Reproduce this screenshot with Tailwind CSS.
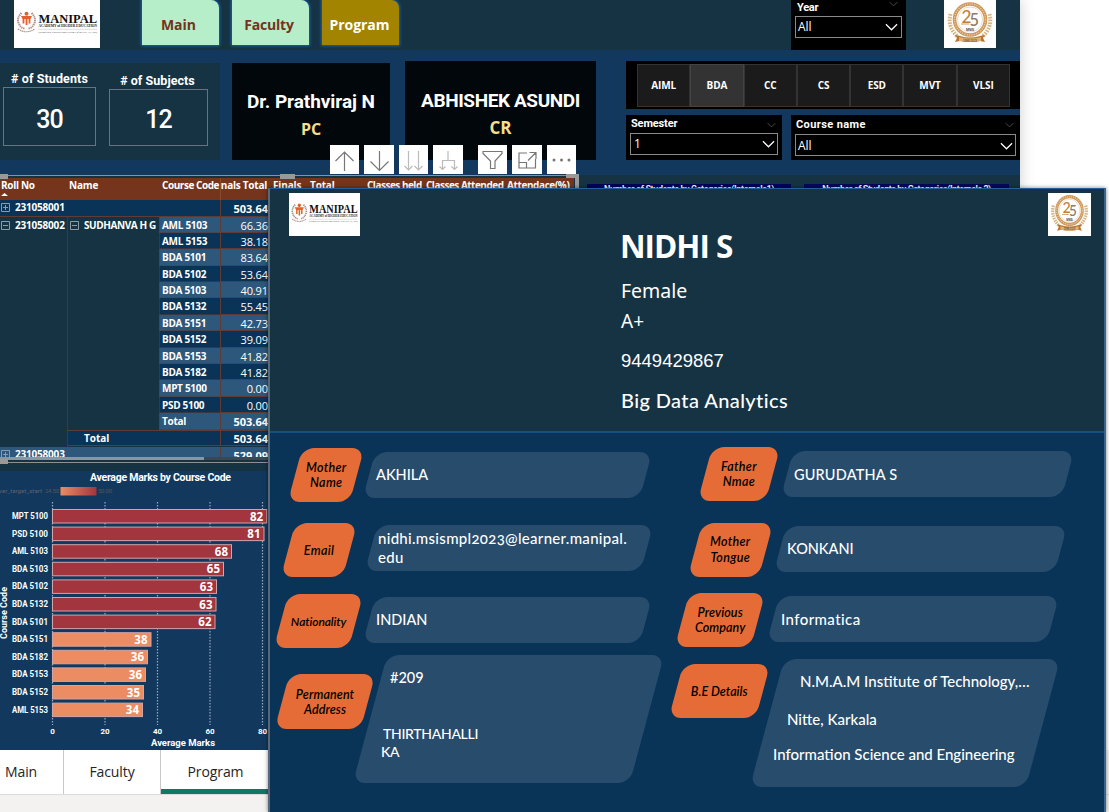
<!DOCTYPE html>
<html lang="en">
<head>
<meta charset="utf-8">
<title>Program dashboard</title>
<script src="https://cdn.jsdelivr.net/npm/@tailwindcss/browser@4"></script>
</head>
<body class="relative h-[812px] w-[1109px] overflow-hidden bg-white font-['Open_Sans',sans-serif] text-white">

<svg class="hidden">
  <symbol id="manipal" viewBox="0 0 86 48">
    <rect width="86" height="48" fill="#fff"/>
    <g fill="none" stroke="#b09088" stroke-width="2" stroke-dasharray="1.4 .6">
      <path d="M7.500 13Q2.500 18 4.500 23T10.500 28.500"/><path d="M17.500 13Q22.500 18 20.500 23T14.500 28.500"/>
      <path d="M4 29Q12 34.500 21 29" stroke-width="1.200"/>
    </g>
    <g fill="#e0622c"><circle cx="12.500" cy="13.800" r="2"/><path d="M7 16h11l-1.500 3h-8zM8.600 18h1.800v5.500H8.600zM11.600 18h1.900v7h-1.900zM14.600 18h1.800v5.500h-1.800z"/></g>
    <text x="24.500" y="22.800" font-family="Liberation Serif" font-weight="700" font-size="13" textLength="58.500" lengthAdjust="spacingAndGlyphs" fill="#111">MANIPAL</text>
    <text x="24.500" y="27" font-family="Liberation Serif" font-weight="700" font-size="3.800" textLength="58.500" lengthAdjust="spacingAndGlyphs" fill="#222">ACADEMY of HIGHER EDUCATION</text>
    <path d="M24 29.300h59" stroke="#aaa" stroke-width=".4"/>
    <text x="24.500" y="32.600" font-family="Liberation Serif" font-size="2.800" textLength="58.500" lengthAdjust="spacingAndGlyphs" fill="#333">(Deemed to be University under Section 3 of the UGC Act, 1956)</text>
  </symbol>
  <symbol id="jubilee" viewBox="0 0 52 48">
    <rect width="52" height="48" fill="#fff"/>
    <g fill="none" stroke="#d6b685" stroke-width="4" stroke-dasharray="1.700 1.100">
      <path d="M6.500 14Q3 27 14 37"/><path d="M45.500 14Q49 27 38 37"/>
    </g>
    <circle cx="26" cy="19.500" r="15.500" fill="#fff" stroke="#cf9656" stroke-width="3.600"/>
    <circle cx="26" cy="19.500" r="15.500" fill="none" stroke="#e8c9a0" stroke-width="1.500" stroke-dasharray="1.200 1.200"/>
    <circle cx="26" cy="19.500" r="12.500" fill="none" stroke="#dcc09a" stroke-width=".6"/>
    <text x="17.500" y="22.500" font-family="Lato" font-weight="500" font-size="17" textLength="10" lengthAdjust="spacingAndGlyphs" fill="#c08040">2</text>
    <text x="25.500" y="26" font-family="Lato" font-weight="500" font-size="18" textLength="9.500" lengthAdjust="spacingAndGlyphs" fill="#8c7a68">5</text>
    <path d="M17 24h8" stroke="#c08040" stroke-width=".8"/>
    <text x="22" y="31" font-family="Liberation Sans" font-weight="700" font-size="3.500" textLength="8" fill="#444">MSIS</text>
    <path d="M11 35l5 1q10 3 20 0l5-1-2 3 2 4-5-1q-10 2-20 0l-5 1 2-4z" fill="#b87430"/>
    <path d="M15 37q11 3 22 0v4q-11 2-22 0z" fill="#e0b070"/>
    <text x="19" y="41.500" font-family="Liberation Sans" font-size="3" textLength="14" fill="#333">1998-2023</text>
  </symbol>
  <symbol id="chev" viewBox="0 0 14 8"><path d="M1 1l6 6 6-6" fill="none" stroke="currentColor" stroke-width="1.300"/></symbol>
</svg>

<!-- Report canvas -->
<main class="flex h-[750px] w-[1020px] flex-col bg-[#163344] shadow-[0_0_14px_rgba(0,0,0,0.2)]">
  <header class="flex h-[50px] shrink-0 items-start">
    <svg class="ml-[14px] h-12 w-[86px]"><use href="#manipal"/></svg>
    <nav class="ml-[42px] flex gap-[13px] text-sm font-bold">
      <a class="flex h-[45px] w-[77px] items-center justify-center rounded-tr-lg bg-[#b6eeca] pt-[5px] pr-[4px] text-[#74341b] shadow-[0_0_3px_1px_#1965b0]">Main</a>
      <a class="flex h-[45px] w-[77px] items-center justify-center rounded-tr-lg bg-[#b6eeca] pt-[5px] pr-[3px] text-[#74341b] shadow-[0_0_3px_1px_#1965b0]"><span class="tracking-[-0.2px]">Faculty</span></a>
      <a class="flex h-[45px] w-[77px] items-center justify-center rounded-tr-lg bg-[#a28400] pt-[5px] pr-[2px] shadow-[0_0_3px_1px_#1965b0]"><span class="tracking-[-0.05px]">Program</span></a>
    </nav>
    <section class="ml-[392px] h-[50px] w-[115px] bg-black px-1 font-[Roboto]">
      <div class="flex h-4 items-center justify-between pr-1 pl-[2px] text-[11px] font-bold"><span class="tracking-[-0.3px]">Year</span><svg class="mb-2 h-[6px] w-[9px] text-[#555]"><use href="#chev"/></svg></div>
      <div class="flex h-[22px] w-[107px] items-center justify-between border border-[#8a8a8a] pr-[3px] pl-[2px] font-['Open_Sans'] text-xs"><span>All</span><svg class="h-2 w-[13px]"><use href="#chev"/></svg></div>
    </section>
    <svg class="ml-[38px] h-12 w-[52px]"><use href="#jubilee"/></svg>
  </header>

  <section class="flex h-[125px] shrink-0 items-start bg-[#12395d] pt-[11px] font-[Roboto]">
    <div class="mt-[2px] flex h-[97px] w-[220px] bg-[#163344] pl-[3px]">
      <div class="w-[93px] pt-[7px] text-center">
        <h2 class="text-[12.500px] leading-[17px] font-bold tracking-[0.1px] whitespace-nowrap"># of Students</h2>
        <p class="flex h-[59px] items-center justify-center border border-[#65757d] pt-[6px] text-[25px] font-medium tracking-[-1px]">30</p>
      </div>
      <div class="ml-[13px] w-[99px] pt-[10px] text-center">
        <h2 class="pr-[2px] text-[12.500px] leading-4 font-bold tracking-[0.05px] whitespace-nowrap"># of Subjects</h2>
        <p class="flex h-[57px] items-center justify-center border border-[#65757d] pt-[5px] text-[25px] font-medium tracking-[-1px]">12</p>
      </div>
    </div>
    <div class="mt-[2px] ml-3 h-[97px] w-[158px] bg-[#02070b] pt-[26px] text-center">
      <h2 class="text-[19px] leading-[26px] font-bold tracking-[-0.05px]">Dr. Prathviraj N</h2>
      <p class="font-['Open_Sans'] text-base leading-7 font-bold text-[#f4df8b]">PC</p>
    </div>
    <div class="ml-[15px] h-[99px] w-[191px] bg-[#02070b] pt-[27px] text-center">
      <h2 class="text-[19px] leading-[26px] font-bold tracking-[-0.4px]">ABHISHEK ASUNDI</h2>
      <p class="font-['Open_Sans'] text-base leading-7 font-bold text-[#f4df8b]"><span class="text-[17px]">CR</span></p>
    </div>
    <div class="ml-[30px] flex w-[394px] flex-col gap-[6px]">
      <div class="flex h-[48px] bg-black py-[3px] pl-[11px] font-['Open_Sans'] text-[10px] font-bold tracking-[-0.1px]">
        <div class="grid h-[43px] w-[373px] grid-cols-7 text-center leading-[41px]">
          <span class="border border-[#333] bg-[#1b1b1b]">AIML</span><span class="border border-[#444] bg-[#333]">BDA</span><span class="border border-[#333] bg-[#1b1b1b]">CC</span><span class="border border-[#333] bg-[#1b1b1b]">CS</span><span class="border border-[#333] bg-[#1b1b1b]">ESD</span><span class="border border-[#333] bg-[#1b1b1b]">MVT</span><span class="border border-[#333] bg-[#1b1b1b]">VLSI</span>
        </div>
      </div>
      <div class="flex gap-[9px]">
        <div class="h-[45px] w-[156px] bg-black px-1">
          <div class="flex h-[18px] items-center justify-between pt-[1px] pr-[2px] pl-[1px] text-[11px] font-bold"><span class="tracking-[-0.15px]">Semester</span><svg class="h-[6px] w-[9px] text-[#555]"><use href="#chev"/></svg></div>
          <div class="flex h-[22px] items-center justify-between border border-[#8a8a8a] pr-[2px] pl-[3px] font-['Open_Sans'] text-xs"><span>1</span><svg class="h-2 w-[13px]"><use href="#chev"/></svg></div>
        </div>
        <div class="h-[45px] w-[229px] bg-black px-1">
          <div class="flex h-[19px] items-center justify-between pt-[1px] pr-[2px] pl-[1px] text-[11px] font-bold"><span class="tracking-[0.4px]">Course name</span><svg class="h-[6px] w-[9px] text-[#555]"><use href="#chev"/></svg></div>
          <div class="flex h-[22px] items-center justify-between border border-[#8a8a8a] pt-[1px] pr-[2px] pl-[2px] font-['Open_Sans'] text-xs"><span>All</span><svg class="h-2 w-[13px]"><use href="#chev"/></svg></div>
        </div>
      </div>
    </div>
  </section>

  <div class="flex flex-1">
    <div class="flex w-[580px] shrink-0 flex-col">
      <!-- Marks matrix -->
      <section class="h-[282px] w-[574px] overflow-hidden border-t border-[#8b9296] pt-[2px] text-[10px] font-bold">
        <div class="flex h-[22px] bg-[#75351d] leading-[15px] tracking-[-0.15px] whitespace-nowrap">
          <div class="w-[67px] pl-[1px] tracking-[-0.3px]">Roll No<svg class="h-[3px] w-[7px]" viewBox="0 0 7 3"><path d="M0 3l3.500-3L7 3z" fill="#fff"/></svg></div>
          <span class="w-[93px] pl-[2px]">Name</span><span class="w-[60px] pl-[2px] tracking-[-0.45px]">Course Code</span>
          <span class="flex w-[48px] justify-end overflow-hidden border-l border-[#8a4a30] pr-[1px] tracking-[-0.25px]">Internals Total</span>
          <span class="w-[38px] pl-[5px]">Finals</span><span class="w-[57px] pl-[4px]">Total</span><span class="w-[59px] pl-[4px] tracking-[-0.5px]">Classes held</span><span class="w-[81px] pl-[4px] tracking-[-0.5px]">Classes Attended</span><span class="pl-[4px] tracking-[-0.4px]">Attendace(%)</span>
        </div>
        <div class="flex h-[16.500px] bg-[#093458] leading-[15px]">
          <span class="flex w-[220px] items-center border-b border-[#5e3b34]"><svg class="mr-[5px] ml-[1px] h-[9px] w-[9px]" viewBox="0 0 9 9"><path d="M.5.5h8v8h-8zM2 4.500h5M4.500 2v5" fill="none" stroke="#8d9ba6"/></svg><span class="tracking-[-0.2px]">231058001</span></span>
          <span class="w-[48px] border-b border-l border-[#5e3b34] pt-[2px] text-right text-[11px] leading-[14px]">503.64</span>
        </div>
        <div class="flex">
          <div class="flex h-[230px] w-[68px] items-start border-r border-[#46383a] bg-[#163344] leading-4"><svg class="mt-1 mr-[5px] ml-[1px] h-[9px] w-[9px]" viewBox="0 0 9 9"><path d="M.5.5h8v8h-8zM2 4.500h5" fill="none" stroke="#8d9ba6"/></svg><span class="tracking-[-0.2px]">231058002</span></div>
          <div>
            <div class="flex">
              <div class="flex w-[91px] items-start bg-[#163344] leading-4 whitespace-nowrap"><svg class="mt-1 mr-[5px] ml-[2px] h-[9px] w-[9px]" viewBox="0 0 9 9"><path d="M.5.5h8v8h-8zM2 4.500h5" fill="none" stroke="#8d9ba6"/></svg><span class="tracking-[-0.4px]">SUDHANVA H G</span></div>
              <div id="marks" class="w-[109px]"></div>
            </div>
            <div class="flex h-[16.400px] w-[200px] border-y border-[#5e3b34] bg-[#093458] leading-[14px]"><span class="w-[152px] pl-4">Total</span><span class="w-[48px] border-l border-[#5e3b34] text-right text-[11px] leading-[16px]">503.64</span></div>
          </div>
        </div>
        <div class="flex h-[10px] w-[268px] overflow-hidden bg-[#2d577b] leading-[15px]"><span class="flex w-[220px] items-start"><svg class="mt-[3px] mr-[5px] ml-[1px] h-[9px] w-[9px]" viewBox="0 0 9 9"><path d="M.5.5h8v8h-8zM2 4.500h5M4.500 2v5" fill="none" stroke="#8d9ba6"/></svg><span class="tracking-[-0.2px]">231058003</span></span><span class="w-[48px] border-l border-[#5e3b34] text-right text-[11px] leading-[17px]">529.09</span></div>
      </section>
      <div class="flex h-[3px] w-[269px] bg-[#3e474f]"><span class="w-[204px] bg-[#8a979e]"></span></div>
      <div class="h-[3px] w-[269px] border-b border-[#8b9296]"></div>
      <!-- Bar chart -->
      <svg id="chart" class="mt-[8px] h-[279px] w-[269px] bg-[#12395d]" viewBox="0 471 269 279">
        <defs><linearGradient id="lg"><stop stop-color="#ec8c62"/><stop offset="1" stop-color="#a2353e"/></linearGradient></defs>
      </svg>
    </div>
    <div class="flex pt-[9px] font-[Roboto] text-[9px] leading-[11px] font-bold">
      <h3 class="ml-[7px] h-3 w-[204px] bg-[#00005c] text-center tracking-[-0.38px] whitespace-nowrap">Number of Students by Categories(Internals1)</h3>
      <h3 class="ml-[13px] h-3 w-[205px] bg-[#08085a] text-center tracking-[-0.45px] whitespace-nowrap">Number of Students by Categories(Internals 2)</h3>
    </div>
  </div>
</main>

<!-- Page tabs -->
<footer class="h-[62px] bg-[#f3f2f1] text-[#252423]">
  <nav class="flex h-[45px] border-b border-[#dcdcdc] text-sm leading-[43px] tracking-[-0.1px]">
    <a class="w-[64px] border-r border-[#c8c8c8] bg-white pl-[5px]">Main</a>
    <a class="w-[97px] border-r border-[#c8c8c8] bg-white text-center">Faculty</a>
    <a class="w-[109px] border-b-[5px] border-[#117865] bg-white text-center font-medium">Program</a>
  </nav>
</footer>

<!-- Resize handles of the selected matrix -->
<i class="absolute top-[174px] left-0 h-[5px] w-2 bg-[#999]"></i>
<i class="absolute top-[174px] left-[280px] h-[5px] w-[15px] bg-[#999]"></i>
<i class="absolute top-[174px] left-[566px] h-[14px] w-[13px] border-t-[4px] border-r-[4px] border-[#999]"></i>
<i class="absolute top-[459px] left-0 h-[5px] w-2 bg-[#999]"></i>

<!-- Visual toolbar -->
<div class="absolute top-[145px] left-[330px] flex gap-[5px] text-[#777]">
  <svg class="h-[29px] w-[29px] bg-white" viewBox="0 0 29 29" fill="none" stroke="currentColor" stroke-width="1.200"><path d="M14.500 26V7M5.500 16l9-9 9 9"/></svg>
  <svg class="h-[29px] w-[30px] bg-white" viewBox="0 0 30 29" fill="none" stroke="currentColor" stroke-width="1.200"><path d="M15.500 6v19M6.500 16.500l9 9 9-9"/></svg>
  <svg class="h-[29px] w-[29px] bg-white" viewBox="0 0 29 29" fill="none" stroke="#bbb" stroke-width="1.200"><path d="M9.500 6v18M5.500 21l4 4 4-4M19.500 6v18M15.500 21l4 4 4-4"/></svg>
  <svg class="h-[29px] w-[30px] bg-white" viewBox="0 0 30 29" fill="none" stroke="#bbb" stroke-width="1.200"><path d="M15 6v9.500M9.500 25v-9.500h12V25M6.500 21.500l3 3 3-3M18.500 21.500l3 3 3-3"/></svg>
  <svg class="ml-[10px] h-[29px] w-[29px] bg-white" viewBox="0 0 29 29" fill="none" stroke="currentColor" stroke-width="1.200"><path d="M5 6.500h19v2l-7 7.500v7.500h-4.500V16L5 8.500z"/></svg>
  <svg class="h-[29px] w-[30px] bg-white" viewBox="0 0 30 29" fill="none" stroke="currentColor" stroke-width="1.200"><path d="M15 8H7v15h16.500v-9M7 17.500h7.500V23M17.500 7.500H24V14M24 7.500l-8 8"/></svg>
  <svg class="h-[29px] w-[29px] bg-white" viewBox="0 0 29 29" fill="currentColor"><circle cx="7" cy="15" r="1.500"/><circle cx="14.500" cy="15" r="1.500"/><circle cx="22" cy="15" r="1.500"/></svg>
</div>

<!-- Student tooltip page -->
<aside class="absolute top-[188px] left-[268px] h-[624px] w-[838px] border-t border-r-2 border-l-2 border-t-[#236099] border-r-[#3a648c] border-l-[#56687a] bg-[#093458] font-[Lato] font-medium shadow-[0_0_4px_rgba(0,0,0,0.5)]">
  <header class="flex h-[244px] items-start border-b-2 border-[#164f85] bg-[#163344]">
    <svg class="mt-1 ml-[19px] h-[43px] w-[71px]" viewBox="0 0 86 48" preserveAspectRatio="none"><rect width="86" height="48" fill="#fff"/><use href="#manipal" width="86" height="48"/></svg>
    <div class="ml-[260px] w-[428px] pt-[36px] font-['Open_Sans']">
      <h1 class="text-[31.500px] leading-[42px] font-bold tracking-[-1px]">NIDHI S</h1>
      <p class="mt-[9px] pl-[1px] font-['Noto_Sans'] text-[19.500px] leading-[30px] font-normal tracking-[0px]">Female</p>
      <p class="pl-[1px] font-['Noto_Sans'] text-[19px] leading-[30px] font-normal">A+</p>
      <p class="mt-[9px] pl-[1px] font-['Liberation_Sans'] text-[18.500px] leading-8">9449429867</p>
      <p class="mt-[7px] pl-[1px] font-[Lato] text-xl leading-8 tracking-[0.4px]">Big Data Analytics</p>
    </div>
    <svg class="mt-1 h-[43px] w-[43px]" viewBox="0 0 52 48" preserveAspectRatio="none"><rect width="52" height="48" fill="#fff"/><use href="#jubilee" width="52" height="48"/></svg>
  </header>

  <div class="flex text-[15px] tracking-[0.3px]">
    <!-- Left column -->
    <div class="w-[400px]">
      <div class="flex items-start pt-[15px] pl-[25px]">
        <div class="flex h-[54px] w-[62px] -skew-x-[15deg] items-center justify-center rounded-[12px] bg-[#e66c37]"><span class="skew-x-[15deg] text-center text-[12.500px] leading-[15px] font-semibold text-black italic">Mother<br>Name</span></div>
        <div class="mt-1 ml-[12px] flex h-[46px] w-[277px] -skew-x-[15deg] items-center rounded-[12px] bg-[#284c6c] pl-[7px]"><span class="skew-x-[15deg] text-[14.500px] tracking-[0px]">AKHILA</span></div>
      </div>
      <div class="flex items-start pt-[21px] pl-[18px]">
        <div class="flex h-[54px] w-[62px] -skew-x-[15deg] items-center justify-center rounded-[12px] bg-[#e66c37]"><span class="skew-x-[15deg] text-center text-[12.500px] leading-[15px] font-semibold text-black italic">Email</span></div>
        <div class="mt-[2px] ml-[21px] flex h-[46px] w-[276px] -skew-x-[15deg] items-center rounded-[12px] bg-[#284c6c] pl-[7px]"><span class="skew-x-[15deg] leading-[19px] whitespace-nowrap [font-feature-settings:'onum']">nidhi.msismpl2023@learner.manipal.<br>edu</span></div>
      </div>
      <div class="flex items-start pt-[17px] pl-[11px]">
        <div class="flex h-[54px] w-[75px] -skew-x-[15deg] items-center justify-center rounded-[12px] bg-[#e66c37]"><span class="skew-x-[15deg] text-center text-[12px] leading-[15px] font-semibold tracking-[-0.1px] text-black italic">Nationality</span></div>
        <div class="mt-[3px] ml-[13px] flex h-[46px] w-[277px] -skew-x-[15deg] items-center rounded-[12px] bg-[#284c6c] pl-[7px]"><span class="skew-x-[15deg] text-[14.500px] tracking-[0px]">INDIAN</span></div>
      </div>
      <div class="flex items-start pt-[7px] pl-[12px]">
        <div class="mt-[19px] flex h-[55px] w-[86px] -skew-x-[15deg] items-center justify-center rounded-[12px] bg-[#e66c37]"><span class="skew-x-[15deg] text-center text-[12.500px] leading-[15px] font-semibold tracking-[0.1px] text-black italic">Permanent<br>Address</span></div>
        <div class="ml-[2px] h-[128px] w-[277px] -skew-x-[15deg] rounded-[12px] bg-[#284c6c]"><div class="flex h-full skew-x-[15deg] flex-col pt-[13px] pl-[12px] leading-5"><span class="pl-[8px] text-[14.500px] tracking-[0px]">#209</span><span class="mt-9 pl-[1px] text-[14px] tracking-[-0.3px]">THIRTHAHALLI</span><span class="-ml-[1px] text-[14px] leading-4 tracking-[-0.3px]">KA</span></div></div>
      </div>
    </div>
    <!-- Right column -->
    <div class="w-[434px]">
      <div class="flex items-start pt-[14px] pl-[35px]">
        <div class="flex h-[54px] w-[68px] -skew-x-[15deg] items-center justify-center rounded-[12px] bg-[#e66c37]"><span class="skew-x-[15deg] text-center text-[12.500px] leading-[15px] font-semibold text-black italic">Father<br>Nmae</span></div>
        <div class="mt-1 ml-[14px] flex h-[46px] w-[281px] -skew-x-[15deg] items-center rounded-[12px] bg-[#284c6c] pl-[7px]"><span class="skew-x-[15deg] pt-[1px] text-[14.500px] tracking-[0.2px]">GURUDATHA S</span></div>
      </div>
      <div class="flex items-start pt-[22px] pl-[25px]">
        <div class="flex h-[54px] w-[71px] -skew-x-[15deg] items-center justify-center rounded-[12px] bg-[#e66c37]"><span class="skew-x-[15deg] text-center text-[12.500px] leading-4 font-semibold text-black italic">Mother<br>Tongue</span></div>
        <div class="mt-[3px] ml-[14px] flex h-[46px] w-[281px] -skew-x-[15deg] items-center rounded-[12px] bg-[#284c6c] pl-[7px]"><span class="skew-x-[15deg] text-[14.500px] tracking-[0px]">KONKANI</span></div>
      </div>
      <div class="flex items-start pt-[16px] pl-[12px]">
        <div class="flex h-[54px] w-[76px] -skew-x-[15deg] items-center justify-center rounded-[12px] bg-[#e66c37]"><span class="skew-x-[15deg] text-center text-[12.500px] leading-[15px] font-semibold tracking-[0.1px] text-black italic">Previous<br>Company</span></div>
        <div class="mt-[3px] ml-[15px] flex h-[46px] w-[280px] -skew-x-[15deg] items-center rounded-[12px] bg-[#284c6c] pl-[8px]"><span class="skew-x-[15deg] pt-[1px] tracking-[0.4px]">Informatica</span></div>
      </div>
      <div class="flex items-start pt-[12px] pl-[6px]">
        <div class="mt-[5px] flex h-[54px] w-[87px] -skew-x-[15deg] items-center justify-center rounded-[12px] bg-[#e66c37]"><span class="skew-x-[15deg] text-center text-[12.500px] leading-[15px] font-semibold tracking-[0px] text-black italic">B.E Details</span></div>
        <div class="ml-[4px] h-[128px] w-[276px] -skew-x-[15deg] rounded-[12px] bg-[#284c6c]"><div class="flex h-full skew-x-[15deg] flex-col pt-[12px] pl-[6px] leading-5 tracking-[0px] whitespace-nowrap"><span class="pl-[27px]">N.M.A.M Institute of Technology,…</span><span class="mt-[18px] pl-[14px]">Nitte, Karkala</span><span class="mt-[15px]">Information Science and Engineering</span></div></div>
      </div>
    </div>
  </div>
</aside>

<script>
const marks = [['AML 5103','66.36'],['AML 5153','38.18'],['BDA 5101','83.64'],['BDA 5102','53.64'],['BDA 5103','40.91'],['BDA 5132','55.45'],['BDA 5151','42.73'],['BDA 5152','39.09'],['BDA 5153','41.82'],['BDA 5182','41.82'],['MPT 5100','0.00'],['PSD 5100','0.00'],['Total','503.64']];
document.getElementById('marks').innerHTML = marks.map(([c, v], i) =>
  `<div class="flex h-[16.400px] ${i % 2 ? 'bg-[#093458]' : 'bg-[#2d577b]'}"><span class="w-[61px] border-b border-l border-[#5e3b34]/60 pl-[2px] leading-4 tracking-[-0.3px]">${c}</span><span class="w-[48px] border-b border-l border-[#5e3b34] text-right text-[11px] leading-[17px] ${c === 'Total' ? 'font-bold' : 'font-medium tracking-[-0.1px]'}">${v}</span></div>`).join('');

const bars = [['MPT 5100',82,266.700],['PSD 5100',81,264],['AML 5103',68,231.500],['BDA 5103',65,223.500],['BDA 5102',63,216.500],['BDA 5132',63,216],['BDA 5101',62,215],['BDA 5151',38,151],['BDA 5182',36,147.500],['BDA 5153',36,145.500],['BDA 5152',35,143.500],['AML 5153',34,142.500]];
let s = `<g fill="#fff" font-weight="700" font-family="Roboto">
<text x="90" y="481" font-size="10.500" textLength="141">Average Marks by Course Code</text>
<text x="-1" y="493" font-size="6" font-weight="400" fill="#62616a" textLength="43">ver_target_start</text>
<text x="45" y="493" font-size="6" font-weight="400" fill="#54565f" textLength="14">24.50</text>
<text x="98" y="493" font-size="6" font-weight="400" fill="#54565f" textLength="14">50.00</text>
<rect x="60.500" y="487" width="36" height="8.500" fill="url(#lg)"/>`;
[0,20,40,60,80].forEach((t, i) => {
  const x = 52.500 + i * 52.500;
  s += `<path d="M${x} 502V725" stroke="#9aaabb" stroke-width="1.200" stroke-dasharray="1.500 1.500"/><text x="${x}" y="734" font-size="8" text-anchor="middle">${t}</text>`;
});
bars.forEach(([n, v, x], i) => {
  const y = 509.500 + i * 17.600;
  s += `<rect x="52.500" y="${y}" width="${x - 52.500}" height="13.500" fill="${i < 7 ? '#a2353e' : '#ec8c62'}" stroke="#d0a5a8"/><text x="48" y="${y + 9.500}" font-size="8.500" text-anchor="end" textLength="36" lengthAdjust="spacingAndGlyphs">${n}</text><text x="${x - 3.500}" y="${y + 11}" font-family="Open Sans" font-size="11.500" text-anchor="end">${v}</text>`;
});
s += `<text x="151" y="746" font-size="9.500" textLength="64" lengthAdjust="spacingAndGlyphs">Average Marks</text><text transform="translate(7 639) rotate(-90)" font-size="9" textLength="52" lengthAdjust="spacingAndGlyphs">Course Code</text></g>`;
document.getElementById('chart').insertAdjacentHTML('beforeend', s);
</script>
</body>
</html>
